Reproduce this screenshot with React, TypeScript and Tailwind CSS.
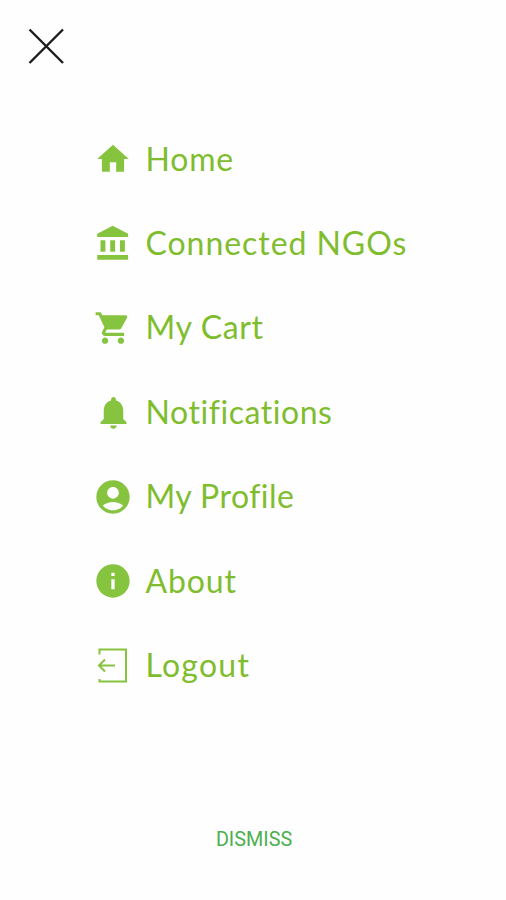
import { type ReactNode } from "react";
import {
  MdAccountCircle,
  MdHome,
  MdInfo,
  MdNotifications,
  MdShoppingCart,
} from "react-icons/md";

interface MenuItem {
  label: string;
  icon: ReactNode;
  textClass: string;
}

function BankIcon() {
  return (
    <svg width="39" height="39" viewBox="0 0 24 24" fill="currentColor">
      <path d="M4 10v7h3v-7H4zm6 0v7h3v-7h-3zM2 22h19v-3H2v3zm14-12v7h3v-7h-3zm-4.5-9L2 6v2h19V6l-9.5-5z" />
    </svg>
  );
}

function LogoutIcon() {
  return (
    <svg width="40" height="40" viewBox="0 0 40 40" fill="none" stroke="currentColor" strokeWidth="2">
      <path d="M6.5 8.5V3.5H33V35.5H6.5V33" />
      <path d="M22 19.5H6M12 13.5L6 19.5L12 25.5" />
    </svg>
  );
}

const items: MenuItem[] = [
  { label: "Home", icon: <MdHome size={38} />, textClass: "tracking-[0.8px]" },
  { label: "Connected NGOs", icon: <BankIcon />, textClass: "tracking-[0.95px]" },
  { label: "My Cart", icon: <MdShoppingCart size={38} />, textClass: "tracking-[0.65px]" },
  { label: "Notifications", icon: <MdNotifications size={39} />, textClass: "tracking-[0.55px]" },
  { label: "My Profile", icon: <MdAccountCircle size={40} />, textClass: "tracking-[0.45px]" },
  { label: "About", icon: <MdInfo size={40} />, textClass: "tracking-[0.9px]" },
  { label: "Logout", icon: <LogoutIcon />, textClass: "tracking-[1.25px]" },
];

export default function App() {
  return (
    <div className="flex h-[900px] w-[506px] flex-col bg-[#fefefe]">
      <button className="mt-[26px] ml-[26px] size-10" aria-label="Close">
        <svg width="40" height="40" viewBox="0 0 40 40" stroke="#1c1c1c" strokeWidth="2.4">
          <path d="M3.5 3.5L37 37M37 3.5L3.5 37" />
        </svg>
      </button>

      <nav className="mt-[51px] ml-[93px] flex flex-col">
        {items.map((item) => (
          <a key={item.label} className="flex h-[84.4px] items-center">
            <span className="flex size-10 shrink-0 items-center justify-center text-[#86c440]">
              {item.icon}
            </span>
            <span
              className={`mb-px ml-[12.5px] whitespace-nowrap font-['Lato',sans-serif] text-[32px] leading-10 text-[#7fbd2e] ${item.textClass}`}
            >
              {item.label}
            </span>
          </a>
        ))}
      </nav>

      <button className="mt-[120px] ml-[2px] self-center font-['Roboto',sans-serif] text-[19.8px] leading-6 text-[#4caf50]">
        DISMISS
      </button>
    </div>
  );
}
